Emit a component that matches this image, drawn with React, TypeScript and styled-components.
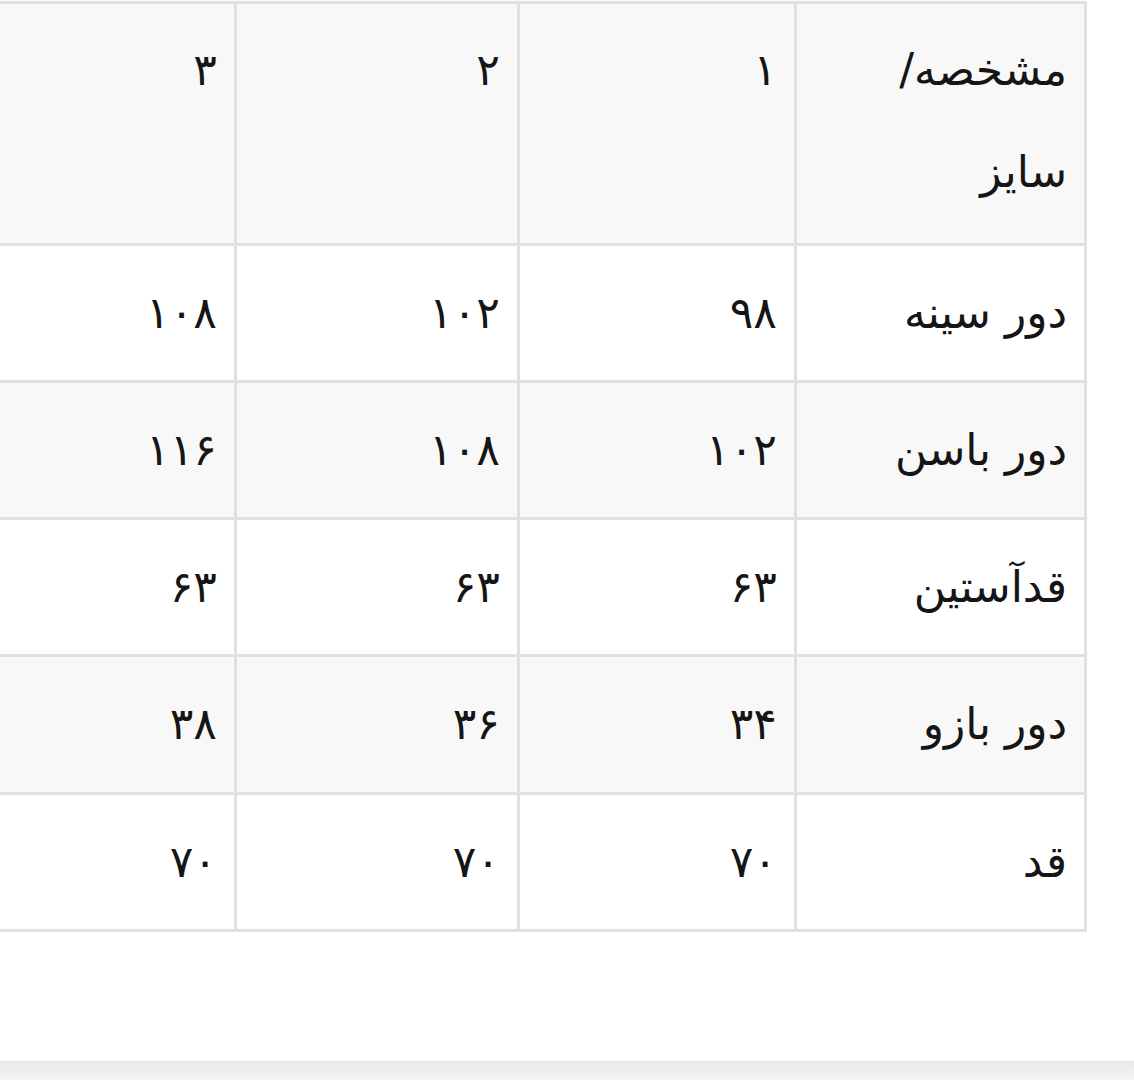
import styled, { createGlobalStyle } from "styled-components";

const GlobalStyle = createGlobalStyle`
  html, body {
    margin: 0;
    padding: 0;
    background: #ffffff;
  }
  body {
    font-family: "DejaVu Sans", "Noto Sans", sans-serif;
    color: #151515;
  }
`;

const Page = styled.div`
  min-height: 100vh;
  display: flex;
  flex-direction: column;
  direction: rtl;
`;

const TableWrap = styled.div`
  overflow: hidden;
  padding-right: 47px;
  padding-top: 1px;
`;

const SizeTable = styled.table`
  border-collapse: collapse;
  table-layout: fixed;
  width: 1130px;
  font-size: 44px;
`;

const Row = styled.tr<{ $striped?: boolean }>`
  background: ${({ $striped }) => ($striped ? "#f8f8f8" : "#ffffff")};
`;

const Cell = styled.td<{ $head?: boolean }>`
  border: 3px solid #e0e0e0;
  padding: ${({ $head }) => ($head ? "15px 17px 19px" : "16px 17px")};
  height: ${({ $head }) => ($head ? "204px" : "102px")};
  line-height: 102.3px;
  text-align: right;
  vertical-align: top;
  white-space: nowrap;
`;

const Spacer = styled.div`
  flex: 1;
`;

const BottomBar = styled.div`
  height: 18px;
  background: linear-gradient(#e9ecee, #f1f3f4);
  border-top: 1px solid #e3e5e6;
`;

const rows: string[][] = [
  ["دور سینه", "۹۸", "۱۰۲", "۱۰۸"],
  ["دور باسن", "۱۰۲", "۱۰۸", "۱۱۶"],
  ["قدآستین", "۶۳", "۶۳", "۶۳"],
  ["دور بازو", "۳۴", "۳۶", "۳۸"],
  ["قد", "۷۰", "۷۰", "۷۰"],
];

export default function App() {
  return (
    <>
      <GlobalStyle />
      <Page>
        <TableWrap>
          <SizeTable>
            <colgroup>
              <col style={{ width: 290 }} />
              <col style={{ width: 277 }} />
              <col style={{ width: 283 }} />
              <col style={{ width: 280 }} />
            </colgroup>
            <tbody>
              <Row $striped>
                <Cell $head>
                  مشخصه/
                  <br />
                  سایز
                </Cell>
                <Cell $head>۱</Cell>
                <Cell $head>۲</Cell>
                <Cell $head>۳</Cell>
              </Row>
              {rows.map((r, i) => (
                <Row key={r[0]} $striped={i % 2 === 1}>
                  {r.map((v, j) => (
                    <Cell key={j}>{v}</Cell>
                  ))}
                </Row>
              ))}
            </tbody>
          </SizeTable>
        </TableWrap>
        <Spacer />
        <BottomBar />
      </Page>
    </>
  );
}
